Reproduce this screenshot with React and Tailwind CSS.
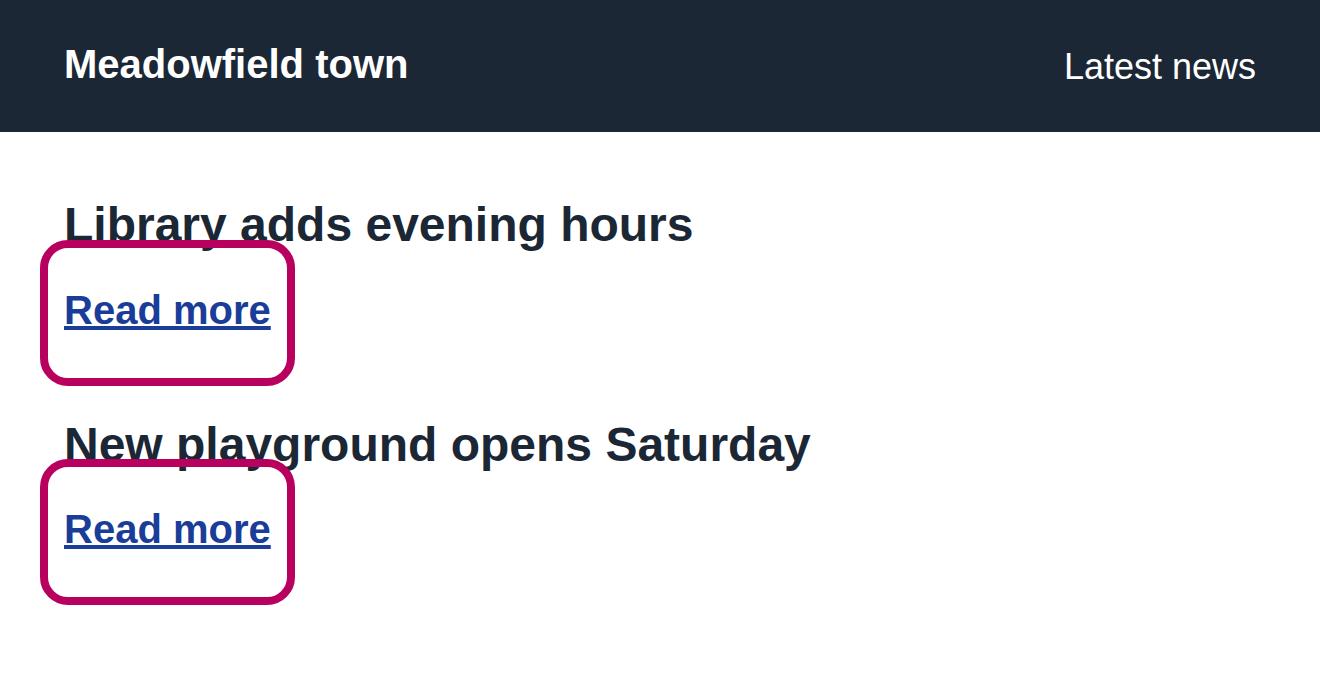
import React from 'react';

const stories = [
  { id: 1, title: 'Library adds evening hours', href: '#library-hours' },
  { id: 2, title: 'New playground opens Saturday', href: '#playground' },
];

export default function App() {
  return (
    <div className="min-h-screen bg-white font-['Liberation_Sans',Arial,sans-serif] text-[#1b2735]">
      {/* Header */}
      <header className="flex h-[132px] items-center justify-between bg-[#1b2735] px-16 text-white">
        <a href="#" className="mb-1 text-[40px] font-bold leading-[46px]">Meadowfield town</a>
        <nav>
          <a href="#news" className="text-[36px] leading-[41px]">Latest news</a>
        </nav>
      </header>

      {/* Story list */}
      <main className="px-16 pt-16">
        {stories.map((story) => (
          <article key={story.id} className="mb-[54px]">
            <h2 className="text-[48px] font-bold leading-[57.6px]">{story.title}</h2>
            <div className="mt-[10px]">
              <a
                href={story.href}
                className="inline-block rounded pt-[23px] pb-[28px] text-[40px] font-bold leading-[47px] text-[#1a3d99] underline outline-8 outline-offset-[16px] outline-[#b8005f]"
              >
                Read more
              </a>
            </div>
          </article>
        ))}
      </main>
    </div>
  );
}
